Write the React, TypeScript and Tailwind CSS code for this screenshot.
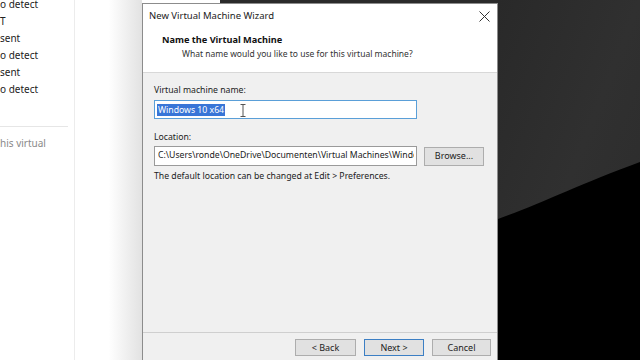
import React from 'react';

const leftItems = ['o detect', 'T', 'sent', 'o detect', 'sent', 'o detect'];

function Wallpaper() {
  return (
    <svg className="absolute inset-0 w-full h-full" viewBox="0 0 143 360" preserveAspectRatio="none">
      <defs>
        <linearGradient id="wp" x1="0" y1="0" x2="1" y2="1">
          <stop offset="0" stopColor="#292929" />
          <stop offset="0.5" stopColor="#303030" />
          <stop offset="1" stopColor="#2b2b2b" />
        </linearGradient>
      </defs>
      <rect x="0" y="0" width="143" height="360" fill="url(#wp)" />
      <path d="M0 219 C 40 205, 80 185, 143 162 L143 360 L0 360 Z" fill="#000" />
    </svg>
  );
}

function Btn({ children, primary, className = '' }: { children: React.ReactNode; primary?: boolean; className?: string }) {
  return (
    <div
      className={
        'h-[17px] flex items-center justify-center text-[9px] text-[#222] bg-[#e1e1e1] border ' +
        (primary ? 'border-[#3c7fc4]' : 'border-[#adadad]') +
        ' ' +
        className
      }
    >
      {children}
    </div>
  );
}

export default function App() {
  return (
    <div className="w-[640px] h-[360px] overflow-hidden flex bg-white" style={{ fontFamily: '"Noto Sans", "Open Sans", Arial, sans-serif' }}>
      {/* page behind the dialog */}
      <div className="w-[142px] h-full flex shrink-0 relative">
        <div className="w-[74px] h-full flex flex-col text-[10px] text-[#222]">
          <div className="flex flex-col leading-[17px] -mt-[4px]">
            {leftItems.map((t, i) => (
              <div key={i} className="h-[17px]">{t}</div>
            ))}
          </div>
          <div className="mt-[28px] mr-[6px] border-t border-[#e6e6e6]" />
          <div className="mt-[9px] text-[#8a8a8a]">his virtual</div>
        </div>
        <div className="w-px h-full bg-[#ececec]" />
        <div className="flex-1 h-full bg-gradient-to-r from-white via-white to-[#e2e2e2]" />
      </div>

      {/* dialog */}
      <div className="w-[356px] h-full flex flex-col shrink-0">
        <div className="h-[3px] flex">
          <div className="w-[78px] bg-white" />
          <div className="flex-1 bg-[#2a2a2a]" />
        </div>
        <div className="flex-1 flex flex-col border-l border-r border-t border-[#8c8c8c] bg-[#f0f0f0]">
          <div className="bg-white h-[25px] flex items-center justify-between pl-[6px] pr-[6px]">
            <span className="text-[9.5px] text-[#222]">New Virtual Machine Wizard</span>
            <svg width="11" height="11" viewBox="0 0 11 11" className="mr-[1px]">
              <path d="M0.5 0.5 L10.5 10.5 M10.5 0.5 L0.5 10.5" stroke="#333" strokeWidth="1" />
            </svg>
          </div>
          <div className="bg-white h-[44px] pl-[19px] pt-[4px] border-b border-[#d8d8d8]">
            <div className="text-[9.2px] font-bold text-[#111] leading-[14px]">Name the Virtual Machine</div>
            <div className="pl-[20px] text-[8.5px] text-[#333] leading-[13px]">What name would you like to use for this virtual machine?</div>
          </div>

          <div className="flex-1 flex flex-col pl-[11px] pt-[11px] text-[8.7px] text-[#222]">
            <div className="leading-[13px]">Virtual machine name:</div>
            <div className="mt-[3px] w-[263px] h-[19px] border border-[#5a9fd8] bg-white flex items-center pl-[2px] relative">
              <span className="bg-[#3875d7] text-white px-[1px] leading-[12px]">Windows 10 x64</span>
              <svg className="absolute left-[85px] top-[3px]" width="6" height="13" viewBox="0 0 6 13">
                <path d="M0.5 0.5 H5.5 M3 0.5 V12.5 M0.5 12.5 H5.5" stroke="#555" strokeWidth="1" fill="none" />
              </svg>
            </div>
            <div className="mt-[12px] leading-[13px]">Location:</div>
            <div className="mt-[2px] flex items-center">
              <div className="w-[263px] h-[20px] border border-[#9a9a9a] bg-white flex items-center pl-[3px] overflow-hidden whitespace-nowrap">
                <span className="block w-[256px] overflow-hidden">C:\Users\ronde\OneDrive\Documenten\Virtual Machines\Windows 10 x64</span>
              </div>
              <Btn className="ml-[7px] w-[60px] h-[19px]">Browse...</Btn>
            </div>
            <div className="mt-[4px] leading-[13px]">The default location can be changed at Edit &gt; Preferences.</div>
          </div>

          <div className="h-[28px] border-t border-[#cfcfcf] flex justify-end pr-[6px] pt-[6px] gap-[8px]">
            <Btn className="w-[61px] ml-[1px]">&lt; Back</Btn>
            <Btn primary className="w-[60px]">Next &gt;</Btn>
            <Btn className="w-[59px]">Cancel</Btn>
          </div>
        </div>
      </div>

      {/* desktop on the right */}
      <div className="flex-1 h-full relative">
        <Wallpaper />
      </div>
    </div>
  );
}
